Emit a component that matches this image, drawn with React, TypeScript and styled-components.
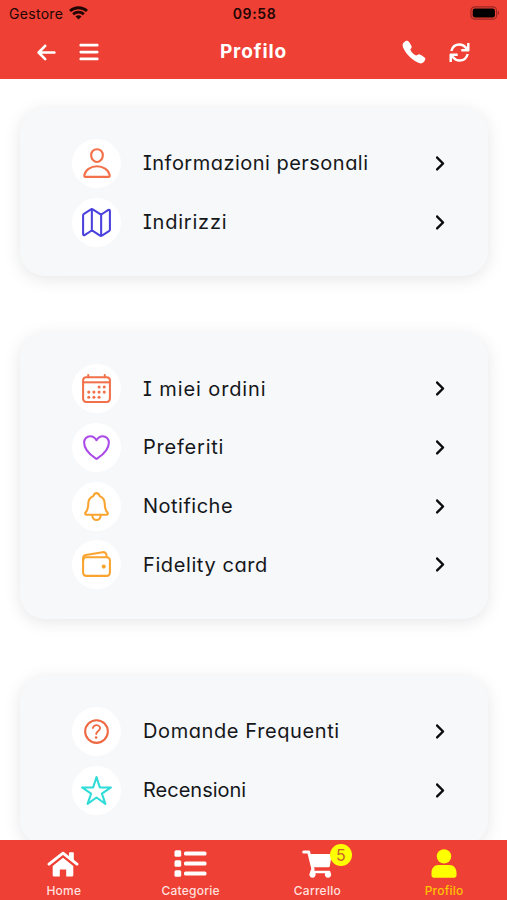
import React from "react";
import styled, { createGlobalStyle } from "styled-components";
import { FaAngleRight, FaArrowLeft, FaBars } from "react-icons/fa6";
import {
  IoCalendarOutline,
  IoCall,
  IoHeartOutline,
  IoHelpCircleOutline,
  IoMapOutline,
  IoNotificationsOutline,
  IoPersonOutline,
  IoStarOutline,
  IoWalletOutline,
} from "react-icons/io5";
import type { IconType } from "react-icons";

const GlobalStyle = createGlobalStyle`
  * { box-sizing: border-box; }
  body { margin: 0; background: #fff; font-family: Inter, "Liberation Sans", sans-serif; }
  svg { display: block; flex: none; }
`;

const Screen = styled.div`
  display: flex;
  flex-direction: column;
  width: 507px;
  height: 900px;
  overflow: hidden;
  background: #fff;
`;

const Header = styled.header`
  flex: none;
  height: 79px;
  background: #ef4035;
`;

const StatusBar = styled.div`
  display: grid;
  grid-template-columns: 1fr auto 1fr;
  align-items: center;
  height: 26px;
  padding: 0 7px 0 9px;
  color: #210603;
  font-size: 14px;
`;

const Carrier = styled.div`
  display: flex;
  align-items: center;
  gap: 6px;
  letter-spacing: 0.3px;
`;

const Clock = styled.div`
  font-weight: 600;
  letter-spacing: 0.6px;
`;

const BatterySlot = styled.div`
  display: flex;
  justify-content: flex-end;
`;

const NavBar = styled.div`
  display: grid;
  grid-template-columns: 1fr auto 1fr;
  align-items: center;
  height: 52px;
  padding: 0 37px 0 36px;
  color: #fff;
`;

const NavGroup = styled.div<{ $end?: boolean; $gap: number }>`
  display: flex;
  align-items: center;
  justify-content: ${(p) => (p.$end ? "flex-end" : "flex-start")};
  gap: ${(p) => p.$gap}px;
`;

const Title = styled.h1`
  margin: 0;
  padding-left: 1px;
  font-size: 19px;
  line-height: 26px;
  font-weight: 700;
  letter-spacing: 0.9px;
`;

const Content = styled.main`
  flex: 1;
  min-height: 0;
  overflow: hidden;
  display: flex;
  flex-direction: column;
  gap: 57px;
  padding: 29px 19px 0 20px;
`;

const Card = styled.section`
  flex: none;
  padding: 26px 39px 25px 52px;
  border-radius: 25px;
  background: #f6f8fa;
  box-shadow: 0 3px 17px rgba(0, 0, 0, 0.1);
`;

const Row = styled.div`
  display: flex;
  align-items: center;
  height: 58.7px;
`;

const IconDisc = styled.span<{ $color: string }>`
  display: grid;
  place-items: center;
  flex: none;
  width: 49px;
  height: 49px;
  border-radius: 50%;
  background: #fff;
  color: ${(p) => p.$color};
`;

const Label = styled.span<{ $spacing: number }>`
  flex: 1;
  padding-left: 22px;
  color: #15171a;
  font-size: 20px;
  line-height: 28px;
  letter-spacing: ${(p) => p.$spacing}px;
  font-feature-settings: "cv08", "cv11";
  white-space: nowrap;
`;

const TabBar = styled.nav`
  display: grid;
  grid-template-columns: repeat(4, 1fr);
  flex: none;
  height: 60px;
  background: #ef4035;
`;

const Tab = styled.div<{ $active?: boolean }>`
  display: flex;
  flex-direction: column;
  align-items: center;
  padding-top: 7px;
  color: ${(p) => (p.$active ? "#ffff00" : "#fff")};
`;

const TabIcon = styled.div`
  position: relative;
  display: grid;
  place-items: center;
  height: 33px;
`;

const TabLabel = styled.span<{ $active?: boolean }>`
  margin-top: 3px;
  padding-left: 1px;
  font-size: 12px;
  line-height: 16px;
  font-weight: 500;
  letter-spacing: 0.25px;
  color: ${(p) => (p.$active ? "#ffc400" : "#ffe1df")};
`;

const Badge = styled.span`
  position: absolute;
  top: -3px;
  right: -20px;
  width: 22px;
  height: 22px;
  border-radius: 50%;
  background: #ffff00;
  color: #c5622a;
  font-size: 16px;
  line-height: 22px;
  text-align: center;
`;

type Item = { label: string; icon: IconType; color: string; spacing: number; size?: number };

const groups: Item[][] = [
  [
    { label: "Informazioni personali", icon: IoPersonOutline, color: "#f2714a", spacing: 0.48, size: 34 },
    { label: "Indirizzi", icon: IoMapOutline, color: "#4b42dd", spacing: 0.78, size: 33 },
  ],
  [
    { label: "I miei ordini", icon: IoCalendarOutline, color: "#f2714a", spacing: 0.9, size: 33 },
    { label: "Preferiti", icon: IoHeartOutline, color: "#ab4be8", spacing: 0.78, size: 33 },
    { label: "Notifiche", icon: IoNotificationsOutline, color: "#faa42f", spacing: 0.5, size: 33 },
    { label: "Fidelity card", icon: IoWalletOutline, color: "#faa42f", spacing: 0.6, size: 33 },
  ],
  [
    { label: "Domande Frequenti", icon: IoHelpCircleOutline, color: "#ee6841", spacing: 0.6, size: 33 },
    { label: "Recensioni", icon: IoStarOutline, color: "#2fdcd8", spacing: 0, size: 33 },
  ],
];

const WifiIcon = () => (
  <svg width="19" height="14" viewBox="0 0 19 14" fill="none" stroke="currentColor" strokeWidth="2.8">
    <path d="M1 5.1C5.8.6 13.2.6 18 5.1" />
    <path d="M4.1 8.3c3-2.8 7.8-2.8 10.8 0" />
    <path d="M6.5 10.5c1.7-1.6 4.3-1.6 6 0L9.5 13.5Z" fill="currentColor" stroke="none" />
  </svg>
);

const BatteryIcon = () => (
  <svg width="30" height="14" viewBox="0 0 30 14">
    <rect x="1" y=".8" width="25.6" height="12.4" rx="3.8" fill="none" stroke="#9b2922" strokeWidth="1.2" />
    <rect x="2.7" y="2.5" width="22.2" height="9" rx="2.2" fill="#000" />
    <path d="M27.9 4.8c1.6.5 1.6 3.9 0 4.4Z" fill="#9b2922" />
  </svg>
);

const RefreshIcon = () => (
  <svg width="21" height="21" viewBox="0 0 21 21" fill="none" stroke="currentColor" strokeWidth="2.4" strokeLinejoin="round">
    <path d="M2.3 9C3.4 4.8 6.6 2.5 10.4 2.5c3 0 5.1 1.3 6.8 3.5M19.3 1v7.2h-7" />
    <path d="M18.7 12c-1.1 4.2-4.3 6.5-8.1 6.5-3 0-5.1-1.3-6.8-3.5M1.7 20v-7.2h7" />
    <path d="M19.3 3.3v4.9h-4.9ZM1.7 17.7v-4.9h4.9Z" fill="currentColor" stroke="none" />
  </svg>
);

const HomeIcon = () => (
  <svg width="32" height="26" viewBox="0 0 32 26" fill="currentColor">
    <path d="M2 13.2 16 2.2l14 11" fill="none" stroke="currentColor" strokeWidth="2.9" strokeLinecap="round" strokeLinejoin="round" />
    <path d="M22 2.2q0-.9.9-.9h3q.9 0 .9.9v8.2L22 6.6Z" />
    <path d="M16 6.8 26.3 15v9.2q0 1.2-1.2 1.2h-5.9v-6.9h-6.4v6.9H6.9q-1.2 0-1.2-1.2V15Z" />
  </svg>
);

const ListIcon = () => (
  <svg width="33" height="27" viewBox="0 0 33 27" fill="currentColor">
    {[0, 10, 20].map((y) => (
      <g key={y}>
        <rect x=".5" y={y + 0.2} width="6.7" height="6.6" rx="1.6" />
        <rect x="10" y={y + 1.5} width="22.5" height="4.1" rx="1.6" />
      </g>
    ))}
  </svg>
);

const CartIcon = () => (
  <svg width="30" height="28" viewBox="0 0 30 28" fill="currentColor">
    <path d="M1.7 2h5l4.4 17.8" fill="none" stroke="currentColor" strokeWidth="3" strokeLinecap="round" strokeLinejoin="round" />
    <path d="M7.3 3.9h21.4q1.1 0 .9 1.1L27.8 16.2q-.2 1.1-1.3 1.1H10.4Z" />
    <path d="M11.1 18.5 9.2 22h18" fill="none" stroke="currentColor" strokeWidth="2.4" strokeLinecap="round" strokeLinejoin="round" />
    <circle cx="10.5" cy="24.6" r="3.1" />
    <circle cx="26" cy="24.6" r="3.1" />
  </svg>
);

const UserIcon = () => (
  <svg width="26" height="29" viewBox="0 0 26 29" fill="currentColor">
    <circle cx="13" cy="7.4" r="7.2" />
    <path d="M7.5 15.9h11c4.2 0 7 3.4 7 7.6v2.8c0 1.5-.9 2.4-2.4 2.4H2.9C1.4 28.7.5 27.8.5 26.3v-2.8c0-4.2 2.8-7.6 7-7.6Z" />
  </svg>
);

export default function App() {
  return (
    <Screen>
      <GlobalStyle />
      <Header>
        <StatusBar>
          <Carrier>
            <span>Gestore</span>
            <WifiIcon />
          </Carrier>
          <Clock>09:58</Clock>
          <BatterySlot>
            <BatteryIcon />
          </BatterySlot>
        </StatusBar>
        <NavBar>
          <NavGroup $gap={21}>
            <FaArrowLeft size={21} />
            <FaBars size={22} />
          </NavGroup>
          <Title>Profilo</Title>
          <NavGroup $end $gap={22}>
            <IoCall size={26} />
            <RefreshIcon />
          </NavGroup>
        </NavBar>
      </Header>
      <Content>
        {groups.map((items) => (
          <Card key={items[0].label}>
            {items.map(({ label, icon: Icon, color, spacing, size = 32 }) => (
              <Row key={label}>
                <IconDisc $color={color}>
                  <Icon size={size} />
                </IconDisc>
                <Label $spacing={spacing}>{label}</Label>
                <FaAngleRight size={19} color="#0b0c0e" />
              </Row>
            ))}
          </Card>
        ))}
      </Content>
      <TabBar>
        <Tab>
          <TabIcon>
            <HomeIcon />
          </TabIcon>
          <TabLabel>Home</TabLabel>
        </Tab>
        <Tab>
          <TabIcon>
            <ListIcon />
          </TabIcon>
          <TabLabel>Categorie</TabLabel>
        </Tab>
        <Tab>
          <TabIcon>
            <CartIcon />
            <Badge>5</Badge>
          </TabIcon>
          <TabLabel>Carrello</TabLabel>
        </Tab>
        <Tab $active>
          <TabIcon>
            <UserIcon />
          </TabIcon>
          <TabLabel $active>Profilo</TabLabel>
        </Tab>
      </TabBar>
    </Screen>
  );
}
